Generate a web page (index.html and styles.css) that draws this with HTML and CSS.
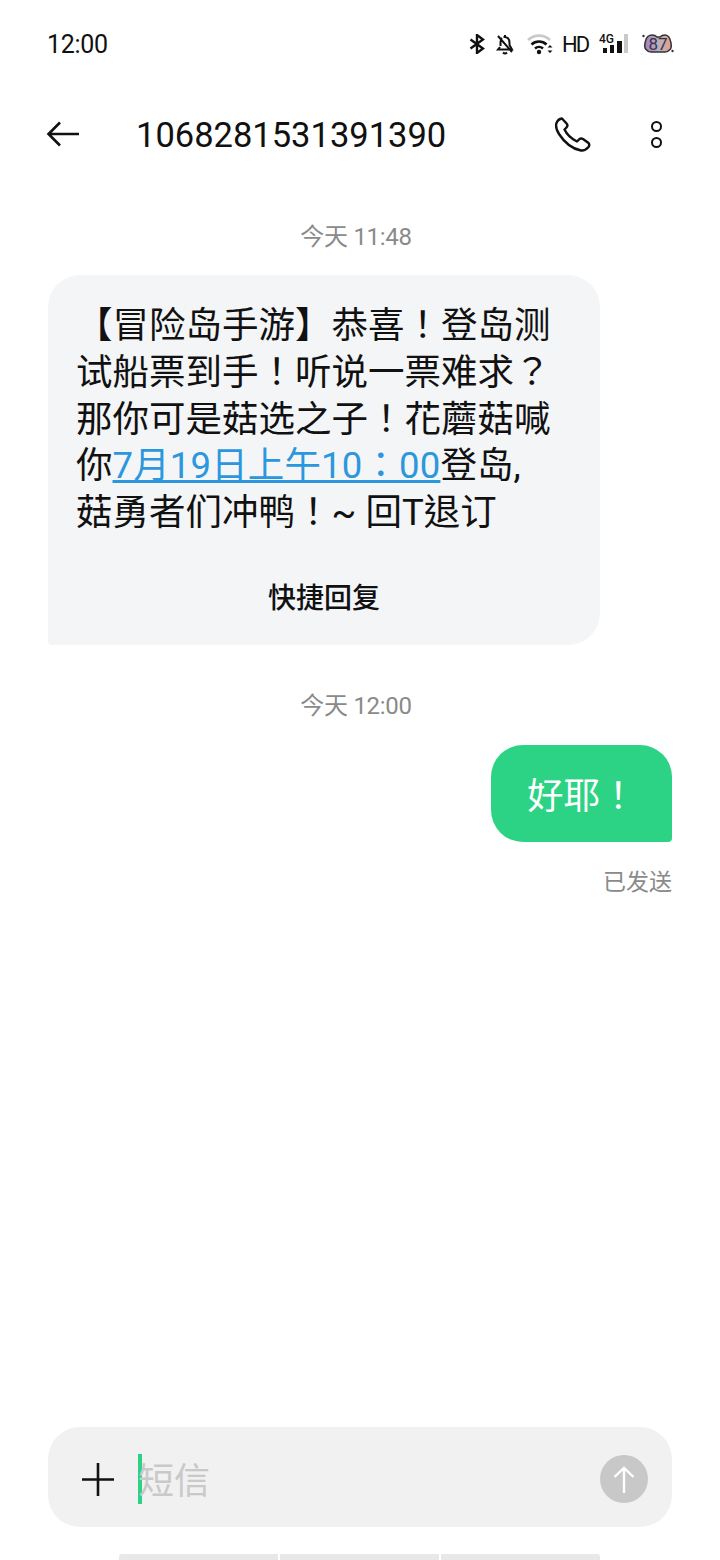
FILE: index.html
```html
<!DOCTYPE html>
<html lang="zh-CN">
<head>
  <meta charset="UTF-8">
  <meta name="viewport" content="width=device-width, initial-scale=1.0">
  <title>短信</title>
  <link rel="stylesheet" href="styles.css">
</head>
<body>
  <div class="status-bar">
    <span class="clock">12:00</span>
    <div class="status-icons">
      <svg class="ic-bt" width="16" height="20" viewBox="0 0 16 20"><path d="M1.500 5.500 L14 14.500 L8 19 V1 L14 5.500 L1.500 14.500" fill="none" stroke="#111" stroke-width="2.400"/></svg>
      <svg class="ic-bell" width="20" height="22" viewBox="0 0 20 22"><path d="M10 2 V4 M5.500 13 V9 Q5.500 6.500 7 5 M8.500 4 Q14.500 3.500 14.500 10 V12 L17 16.500 H3 L5 14 M8 19.500 Q10 21.500 12 19.500 M3 3 L17 19" fill="none" stroke="#111" stroke-width="2"/></svg>
      <svg class="ic-wifi" width="28" height="22" viewBox="0 0 28 22"><path d="M1 7 A16 16 0 0 1 23 7" fill="none" stroke="#c9c9c9" stroke-width="2.600"/><path d="M4.500 11.500 A11 11 0 0 1 19.500 11.500 M8 15.500 A6 6 0 0 1 16 15.500" fill="none" stroke="#111" stroke-width="2.600"/><circle cx="12" cy="19" r="2.200" fill="#111"/><path d="M20.500 14.500 L23 12 L25.500 14.500 Z M20.500 17.500 L23 20 L25.500 17.500 Z" fill="#111"/></svg>
      <span class="hd">HD</span>
      <div class="signal">
        <span class="net">4G</span>
        <svg width="30" height="22" viewBox="0 0 30 22"><rect x="4" y="15" width="4" height="5" fill="#111"/><rect x="11" y="12" width="4" height="8" fill="#111"/><rect x="18" y="8" width="5" height="12" fill="#111"/><rect x="25" y="1" width="4" height="19" fill="#c9c9c9"/></svg>
      </div>
      <div class="battery">
        <svg width="32" height="20" viewBox="0 0 32 20">
          <defs><linearGradient id="battFill"><stop offset="0" stop-color="#a57fc0"/><stop offset="0.55" stop-color="#b9b4b8"/><stop offset="1" stop-color="#e69d8e"/></linearGradient></defs>
          <path d="M3.500 7 Q5 1 10 1 Q13 1 15 3 H18 Q20 1 23 1 Q27 1 28.500 7 Q30 12 28.500 15 Q26 18 23 18 H9 Q6 18 3.500 15 Q2 12 3.500 7 Z" fill="url(#battFill)" stroke="#333" stroke-width="1.500"/>
          <circle cx="1.500" cy="2" r="1.200" fill="#333"/><circle cx="30.500" cy="17" r="1.200" fill="#333"/>
        </svg>
        <span class="batt-num">87</span>
      </div>
    </div>
  </div>

  <div class="toolbar">
    <svg class="back" width="34" height="26" viewBox="0 0 34 26"><path d="M33 13 H2.500 M14 1.500 L2.500 13 L14 24.500" fill="none" stroke="#111" stroke-width="2.600"/></svg>
    <h1 class="title">1068281531391390</h1>
    <svg class="phone" width="36" height="35" viewBox="0 0 36 35"><path d="M7 1.500 L12 7 Q13 9 11.500 10.500 L9.500 12.500 Q13 20 22 24.500 L24.500 22 Q26 21 28 22 L33.500 26 Q35 28 33.500 30 Q30 34 26 33.500 Q13 31 4 17 Q0 11 1.500 6 Q3 2 7 1.500 Z" fill="none" stroke="#111" stroke-width="2.400" stroke-linejoin="round"/></svg>
    <div class="more"><i></i><i></i></div>
  </div>

  <div class="thread">
    <div class="stamp stamp-first">今天 11:48</div>
    <div class="bubble-in">
      <p class="msg" lang="zh-TW">【冒险岛手游】恭喜！登岛测试船票到手！听说一票难求？那你可是菇选之子！花蘑菇喊你<a class="msg-link">7月19日上午10：00</a>登岛, 菇勇者们冲鸭！~ 回T退订</p>
      <div class="quick">快捷回复</div>
    </div>
    <div class="stamp stamp-second">今天 12:00</div>
    <div class="bubble-out" lang="zh-TW">好耶！</div>
    <div class="sent">已发送</div>
  </div>

  <div class="composer">
    <svg class="plus" width="32" height="33" viewBox="0 0 32 33"><path d="M16 0 V33 M0 16.500 H32" stroke="#111" stroke-width="2.600"/></svg>
    <span class="caret"></span>
    <span class="placeholder">短信</span>
    <div class="send"><svg width="22" height="27" viewBox="0 0 22 27"><path d="M11 27 V2 M1.500 11 L11 2 L20.500 11" fill="none" stroke="#fff" stroke-width="2.400"/></svg></div>
  </div>

  <div class="nav-bar"><span></span><span></span><span></span></div>
</body>
</html>
```

FILE: styles.css
```css
html, body {
  margin: 0;
  padding: 0;
}
body {
  width: 720px;
  height: 1560px;
  overflow: hidden;
  display: flex;
  flex-direction: column;
  background-color: #fff;
  color: #111;
  font-family: Roboto, "Noto Sans CJK SC", sans-serif;
}
.status-bar {
  height: 88px;
  padding: 0 46px 0 47px;
  display: flex;
  align-items: center;
  justify-content: space-between;
}
.clock {
  font-size: 25px;
  letter-spacing: -0.300px;
}
.status-icons {
  display: flex;
  align-items: center;
}
.ic-bell {
  margin-left: 10px;
}
.ic-wifi {
  margin-left: 12px;
}
.hd {
  margin-left: 7px;
  width: 27px;
  font-size: 22px;
  letter-spacing: -2px;
}
.signal {
  position: relative;
  margin-left: 10px;
  width: 30px;
  height: 22px;
}
.net {
  position: absolute;
  top: 0;
  left: 0;
  font-size: 12px;
  line-height: 12px;
  font-weight: 500;
}
.battery {
  position: relative;
  margin-left: 13px;
  width: 32px;
  height: 20px;
}
.batt-num {
  position: absolute;
  top: 0;
  left: 0;
  width: 32px;
  font-size: 17px;
  line-height: 20px;
  text-align: center;
  color: #3a3050;
}
.toolbar {
  height: 92px;
  padding: 0 58px 0 46px;
  display: flex;
  align-items: center;
}
.title {
  margin: 2px 0 0 56px;
  font-size: 34.500px;
  font-weight: 400;
  flex: 1;
}
.more {
  margin-left: 60px;
  display: flex;
  flex-direction: column;
  gap: 5px;
}
.more i {
  display: block;
  box-sizing: border-box;
  width: 11px;
  height: 11px;
  border: 2.500px solid #111;
  border-radius: 50%;
}
.thread {
  flex: 1;
  padding: 0 48px;
  display: flex;
  flex-direction: column;
}
.stamp {
  font-size: 24px;
  letter-spacing: -0.300px;
  line-height: 30px;
  color: #8a8a8a;
  text-align: center;
  padding-right: 8px;
}
.stamp-first {
  margin-top: 42px;
}
.stamp-second {
  margin-top: 46px;
}
.bubble-in {
  margin-top: 23px;
  width: 552px;
  box-sizing: border-box;
  height: 370px;
  padding: 28px 40px 0 28px;
  background-color: #f4f5f7;
  border-radius: 32px 32px 32px 4px;
}
.msg {
  margin: 0;
  font-family: Roboto, "Noto Sans CJK TC", sans-serif;
  font-size: 36.500px;
  line-height: 46.800px;
  color: #111;
}
.msg-link {
  color: #2c97dd;
  text-decoration: underline;
  letter-spacing: 0.150px;
}
.quick {
  margin: 39px -40px 0 -28px;
  font-size: 28px;
  font-weight: 500;
  text-align: center;
}
.bubble-out {
  margin-top: 24px;
  align-self: flex-end;
  width: 181px;
  height: 97px;
  box-sizing: border-box;
  padding-left: 36px;
  display: flex;
  align-items: center;
  font-family: Roboto, "Noto Sans CJK TC", sans-serif;
  font-size: 36.500px;
  color: #fff;
  background-color: #2dd384;
  border-radius: 32px 32px 4px 32px;
}
.sent {
  margin-top: 26px;
  text-align: right;
  font-size: 23px;
  line-height: 30px;
  color: #8a8a8a;
}
.composer {
  margin: 0 48px;
  height: 100px;
  box-sizing: border-box;
  padding: 4px 24px 0 34px;
  display: flex;
  align-items: center;
  background-color: #f1f1f1;
  border-radius: 32px;
}
.caret {
  margin-left: 24px;
  width: 4px;
  height: 50px;
  background-color: #2dd384;
}
.placeholder {
  margin: -3px 0 0 -4px;
  font-size: 36px;
  color: #c9c9c9;
  flex: 1;
}
.send {
  width: 48px;
  height: 48px;
  border-radius: 50%;
  background-color: #c8c8c8;
  display: flex;
  align-items: center;
  justify-content: center;
}
.nav-bar {
  margin: 27px 0 0 119px;
  width: 481px;
  height: 6px;
  display: flex;
  gap: 2px;
}
.nav-bar span {
  flex: 1;
  background-color: #e8e8e8;
}
.nav-bar span:first-child {
  border-radius: 3px 0 0 0;
}
.nav-bar span:last-child {
  border-radius: 0 3px 0 0;
}
```
